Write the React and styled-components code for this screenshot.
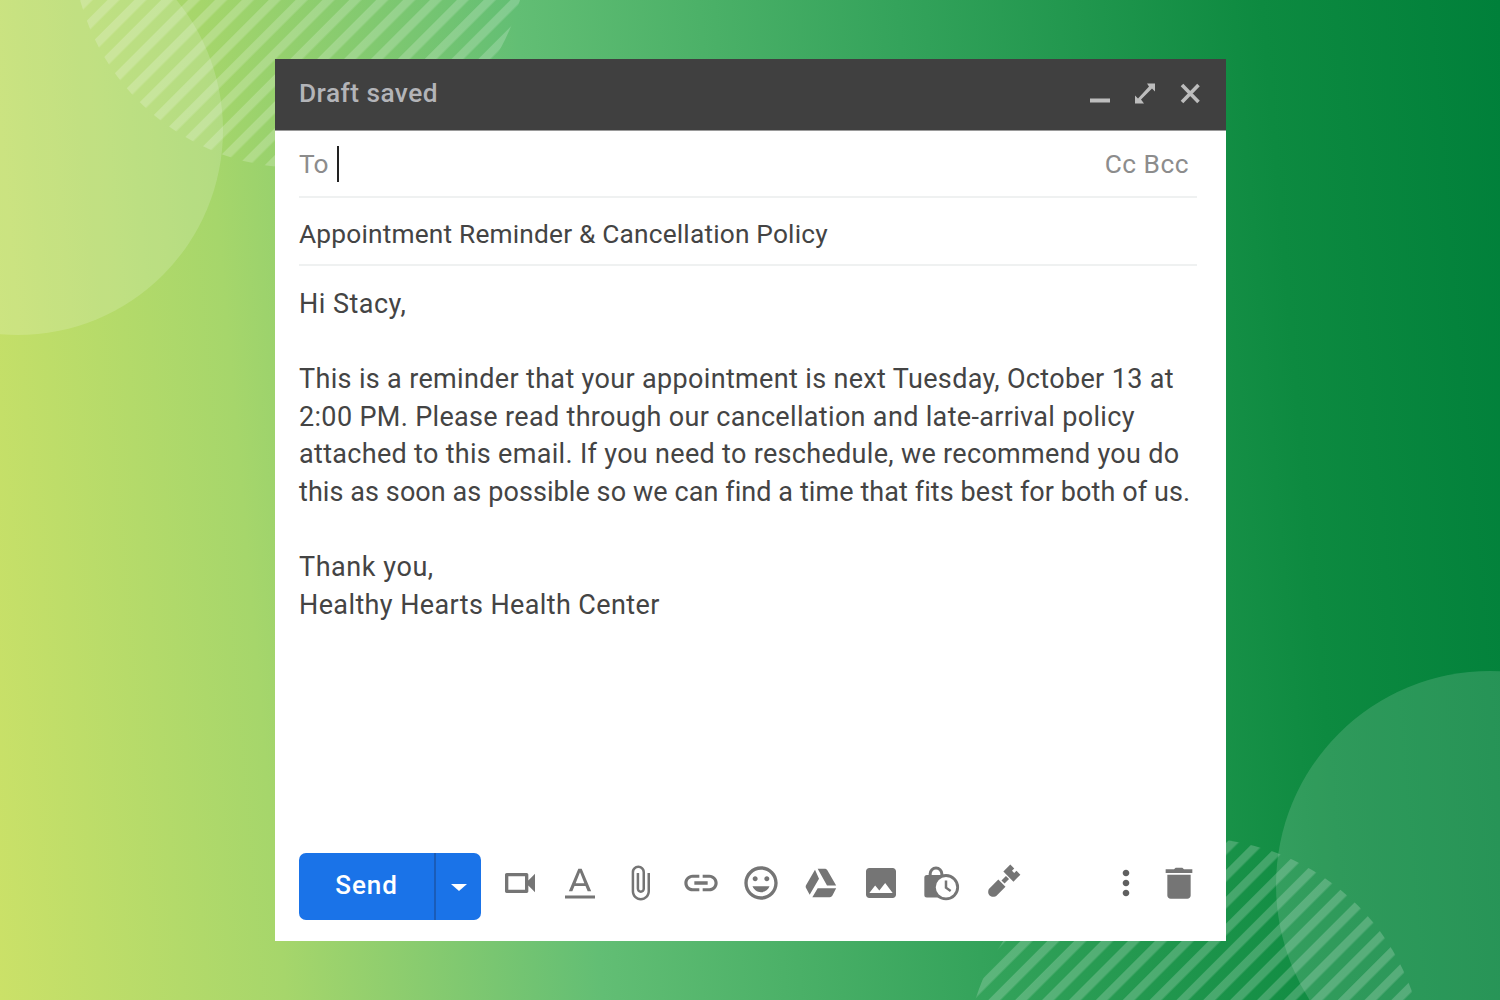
import styled, { createGlobalStyle } from "styled-components";

const GlobalStyle = createGlobalStyle`
  *, *::before, *::after {
    box-sizing: border-box;
  }

  html, body {
    margin: 0;
    padding: 0;
  }

  body {
    font-family: Roboto, "Liberation Sans", sans-serif;
  }
`;

// tracking per line: the source is an upscaled 14px render, so its advances vary
const BODY_PARAGRAPHS = [
  [{ text: "Hi Stacy,", tracking: 0.48 }],
  [
    {
      text: "This is a reminder that your appointment is next Tuesday, October 13 at",
      tracking: 0.34,
    },
    {
      text: "2:00 PM. Please read through our cancellation and late-arrival policy",
      tracking: 0.33,
    },
    {
      text: "attached to this email. If you need to reschedule, we recommend you do",
      tracking: 0.31,
    },
    {
      text: "this as soon as possible so we can find a time that fits best for both of us.",
      tracking: 0.08,
    },
  ],
  [
    { text: "Thank you,", tracking: 0.56 },
    { text: "Healthy Hearts Health Center", tracking: 0.39 },
  ],
];

const Backdrop = () => (
  <BackdropSvg viewBox="0 0 1500 1000">
    <defs>
      <pattern
        id="stripes"
        width="19"
        height="19"
        patternUnits="userSpaceOnUse"
        patternTransform="rotate(45)"
      >
        <rect width="8.5" height="19" fill="#fff" fillOpacity="0.2" />
      </pattern>
    </defs>
    <circle cx="300" cy="-60" r="228" fill="url(#stripes)" />
    <circle cx="1195" cy="1068" r="230" fill="url(#stripes)" />
    <circle cx="18" cy="130" r="205" fill="#fff" fillOpacity="0.16" />
    <circle cx="1490" cy="885" r="214" fill="#fff" fillOpacity="0.14" />
  </BackdropSvg>
);

const Icon = ({ children, $fill = "#757575" }) => (
  <IconSvg viewBox="0 0 24 24" fill={$fill}>
    {children}
  </IconSvg>
);

const VideoIcon = () => (
  <Icon>
    <path d="M15 8v8H5V8h10m1-2H4c-.55 0-1 .45-1 1v10c0 .55.45 1 1 1h12c.55 0 1-.45 1-1v-3.500l4 4v-11l-4 4V7c0-.55-.45-1-1-1z" />
  </Icon>
);

const FormatIcon = () => (
  <Icon>
    <path d="M3 19.500v1.800h18v-1.800H3zM8.700 13.800h6.600l1.300 3.200h2.100L13 3.500h-2L5.300 17h2.100l1.300-3.200zM12 5.600l2.600 6.500H9.400L12 5.600z" />
  </Icon>
);

const AttachIcon = () => (
  <Icon>
    <path d="M16.500 6v11c0 2.210-1.790 4-4 4s-4-1.790-4-4V5.500c0-1.380 1.120-2.500 2.500-2.500s2.500 1.120 2.500 2.500V15.500c0 .55-.45 1-1 1s-1-.45-1-1V6H10v9.500c0 1.380 1.120 2.500 2.500 2.500s2.500-1.120 2.500-2.500V5.500c0-2.210-1.790-4-4-4s-4 1.790-4 4V17c0 3.040 2.460 5.500 5.500 5.500S18 20.040 18 17V6h-1.500z" />
  </Icon>
);

const LinkIcon = () => (
  <Icon>
    <path d="M3.900 12c0-1.710 1.390-3.100 3.100-3.100h4V7H7c-2.760 0-5 2.240-5 5s2.240 5 5 5h4v-1.900H7c-1.710 0-3.100-1.390-3.100-3.100zM8 13h8v-2H8v2zm9-6h-4v1.900h4c1.710 0 3.100 1.390 3.100 3.100s-1.390 3.100-3.100 3.100h-4V17h4c2.760 0 5-2.240 5-5s-2.240-5-5-5z" />
  </Icon>
);

const EmojiIcon = () => (
  <Icon>
    <path d="M11.990 2C6.470 2 2 6.480 2 12s4.470 10 9.990 10C17.520 22 22 17.520 22 12S17.520 2 11.990 2zM12 20c-4.420 0-8-3.580-8-8s3.580-8 8-8 8 3.580 8 8-3.580 8-8 8zm3.500-9c.83 0 1.500-.67 1.500-1.500S16.330 8 15.500 8 14 8.670 14 9.500s.67 1.500 1.500 1.500zm-7 0c.83 0 1.500-.67 1.500-1.500S9.330 8 8.500 8 7 8.670 7 9.500 7.670 11 8.500 11zm3.500 6.500c2.330 0 4.310-1.460 5.110-3.500H6.890c.8 2.040 2.780 3.500 5.110 3.500z" />
  </Icon>
);

const DriveIcon = () => (
  <Icon>
    <path d="M8.400 4 3.100 13.200c-.4.700-.4 1.300 0 2L5.200 19l5.600-9.600zM10 3.500h4.200c.7 0 1.200.3 1.600.9l5.300 9.100h-5.500L10 3.500zM6.800 20.500l3.200-5.300h11.100l-2 3.800c-.4.900-1 1.500-1.900 1.500z" />
  </Icon>
);

const ImageIcon = () => (
  <Icon>
    <path d="M21 19V5c0-1.100-.9-2-2-2H5c-1.100 0-2 .9-2 2v14c0 1.100.9 2 2 2h14c1.100 0 2-.9 2-2zM8.500 13.500l2.500 3.010L14.500 12l4.500 6H5l3.500-4.500z" />
  </Icon>
);

const ConfidentialIcon = () => (
  <Icon>
    <rect x="2" y="7.200" width="14" height="13.500" rx="1.500" />
    <path d="M5.500 8V6.500a3.500 3.500 0 0 1 7 0V9" fill="none" stroke="#757575" strokeWidth="1.800" />
    <circle cx="15" cy="14.500" r="7" fill="#fff" stroke="#757575" strokeWidth="1.700" />
    <path d="M15 10.500v4.300l2.800 2" fill="none" stroke="#757575" strokeWidth="1.500" />
  </Icon>
);

const SignatureIcon = () => (
  <Icon>
    <g transform="rotate(45 12 12) translate(.6 .2) scale(0.95)">
      <path d="M8.800 12.500h6.400v8c0 1.200-1.400 3-3.200 3s-3.200-1.800-3.200-3z" />
      <rect x="10.600" y="7.500" width="2.800" height="4" />
      <path d="M7.500 .5h3.500v2h2v-2h3.500v6.200h-9z" />
    </g>
  </Icon>
);

const MoreIcon = () => (
  <Icon $fill="#5f5f5f">
    <path d="M12 8c1.100 0 2-.9 2-2s-.9-2-2-2-2 .9-2 2 .9 2 2 2zm0 2c-1.100 0-2 .9-2 2s.9 2 2 2 2-.9 2-2-.9-2-2-2zm0 6c-1.100 0-2 .9-2 2s.9 2 2 2 2-.9 2-2-.9-2-2-2z" />
  </Icon>
);

const TrashIcon = () => (
  <Icon>
    <path d="M5 19.500c0 1.100.9 2 2 2h10c1.100 0 2-.9 2-2V7H5zM20 3.800h-5l-1-1h-4l-1 1H4v2.200h16z" />
  </Icon>
);

const TOOL_ICONS = [
  VideoIcon,
  FormatIcon,
  AttachIcon,
  LinkIcon,
  EmojiIcon,
  DriveIcon,
  ImageIcon,
  ConfidentialIcon,
  SignatureIcon,
];

const App = () => {
  return (
    <>
      <GlobalStyle />
      <Stage>
        <Backdrop />
        <Compose>
          <TitleBar>
            <Title>Draft saved</Title>
            <WindowControls>
              <WindowSvg viewBox="0 0 24 24">
                <rect x="2" y="15.500" width="20" height="4" />
              </WindowSvg>
              <WindowSvg viewBox="0 0 24 24">
                <path d="M14 .5h8v8l-3-3L8 16.500l3 4H2v-8l3 3L16 3.500z" />
              </WindowSvg>
              <WindowSvg viewBox="0 0 24 24">
                <path d="M4 2l16.500 17M20.500 2 4 19" fill="none" stroke="#bdbdbd" strokeWidth="3.600" />
              </WindowSvg>
            </WindowControls>
          </TitleBar>
          <Fields>
            <ToRow>
              <Muted>To</Muted>
              <Caret />
              <CopyLinks>Cc Bcc</CopyLinks>
            </ToRow>
            <SubjectRow>Appointment Reminder &amp; Cancellation Policy</SubjectRow>
          </Fields>
          <Message>
            {BODY_PARAGRAPHS.map((lines) => (
              <Paragraph key={lines[0].text}>
                {lines.map((line) => (
                  <Line key={line.text} $tracking={line.tracking}>
                    {line.text}
                  </Line>
                ))}
              </Paragraph>
            ))}
          </Message>
          <Footer>
            <SendGroup>
              <SendButton>Send</SendButton>
              <SendMenu>
                <Arrow />
              </SendMenu>
            </SendGroup>
            <Tools>
              {TOOL_ICONS.map((ToolIcon, i) => (
                <ToolIcon key={i} />
              ))}
            </Tools>
            <EndTools>
              <MoreIcon />
              <TrashIcon />
            </EndTools>
          </Footer>
        </Compose>
      </Stage>
    </>
  );
};

export default App;

const Stage = styled.div`
  position: relative;
  height: 1000px;
  overflow: hidden;
  display: flex;
  align-items: center;
  justify-content: center;
  background: linear-gradient(
    85deg,
    #cbe168 0%,
    #a6d66b 18%,
    #62be74 38%,
    #34a35b 62%,
    #0d8a40 85%,
    #00803a 100%
  );
`;

const BackdropSvg = styled.svg`
  position: absolute;
  inset: 0;
  width: 100%;
  height: 100%;
`;

const Compose = styled.div`
  position: relative;
  width: 951px;
  height: 882px;
  margin-left: 1px;
  background: #fff;
  display: flex;
  flex-direction: column;
`;

const TitleBar = styled.div`
  height: 72px;
  flex-shrink: 0;
  padding: 0 24px;
  background: #404040;
  border-bottom: 1px solid #9a9a9a;
  display: flex;
  align-items: center;
  justify-content: space-between;
`;

const Title = styled.div`
  margin-bottom: 4px;
  font-size: 26.3px;
  font-weight: 500;
  letter-spacing: 0.45px;
  color: #b3b4b8;
`;

const WindowControls = styled.div`
  display: flex;
  gap: 21px;
`;

const WindowSvg = styled.svg`
  width: 24px;
  height: 24px;
  fill: #bdbdbd;
`;

const Fields = styled.div`
  padding: 0 29px 0 24px;
`;

const ToRow = styled.div`
  height: 67px;
  border-bottom: 2px solid #eff1f1;
  display: flex;
  align-items: center;
  font-size: 26.3px;
`;

const Muted = styled.span`
  color: #8c8c8c;
`;

const Caret = styled.span`
  width: 2px;
  height: 36px;
  margin-left: 9px;
  background: #222;
`;

const CopyLinks = styled.span`
  margin-left: auto;
  margin-right: 8px;
  letter-spacing: 0.5px;
  color: #8c8c8c;
`;

const SubjectRow = styled.div`
  height: 68px;
  padding-top: 5px;
  border-bottom: 2px solid #eff1f1;
  display: flex;
  align-items: center;
  font-size: 26.3px;
  letter-spacing: 0.18px;
  color: #444;
`;

const Message = styled.div`
  flex: 1;
  padding: 20px 24px 0;
  font-size: 27px;
  line-height: 37.6px;
  color: #444;
`;

const Paragraph = styled.div`
  margin-bottom: 37.6px;
`;

const Line = styled.div`
  white-space: nowrap;
  letter-spacing: ${(props) => props.$tracking}px;
`;

const Footer = styled.div`
  height: 88px;
  flex-shrink: 0;
  padding: 0 27px 21px 24px;
  display: flex;
  align-items: center;
`;

const SendGroup = styled.div`
  width: 182px;
  height: 67px;
  border-radius: 7px;
  background: #1a73e8;
  display: flex;
`;

const SendButton = styled.div`
  width: 137px;
  padding-bottom: 3px;
  border-right: 2px solid #1a5cb8;
  display: flex;
  align-items: center;
  justify-content: center;
  font-size: 26px;
  font-weight: 500;
  letter-spacing: 0.9px;
  color: #fff;
`;

const SendMenu = styled.div`
  flex: 1;
  display: flex;
  align-items: center;
  justify-content: center;
`;

const Arrow = styled.span`
  width: 0;
  height: 0;
  margin-top: 1px;
  border-left: 8px solid transparent;
  border-right: 8px solid transparent;
  border-top: 7px solid #fff;
`;

const Tools = styled.div`
  margin-left: 19px;
  margin-bottom: 7px;
  display: flex;
  gap: 20.2px;
`;

const EndTools = styled.div`
  margin-left: auto;
  margin-bottom: 7px;
  display: flex;
  gap: 13px;
`;

const IconSvg = styled.svg`
  display: block;
  width: 40px;
  height: 40px;
`;
